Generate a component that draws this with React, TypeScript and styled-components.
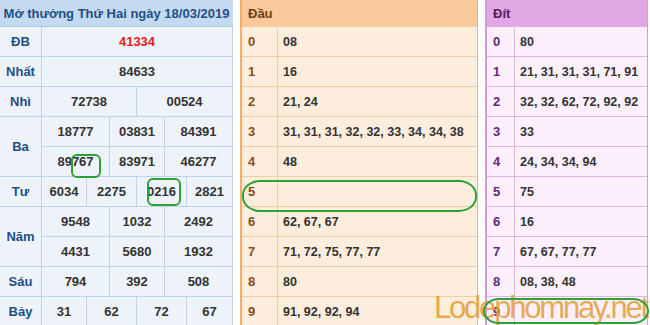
import styled, { createGlobalStyle } from "styled-components";
import { Fragment } from "react";

const GlobalStyle = createGlobalStyle`
  body {
    margin: 0;
    background: #fff;
    font-family: "Liberation Sans", Arial, sans-serif;
  }
  * { box-sizing: border-box; }
`;

type Tone = {
  head: string;
  body: string;
  line: string;
  edge: string;
  digit: string;
  title: string;
};

const orange: Tone = {
  head: "#f9c89b",
  body: "#fdeddc",
  line: "#f1cda6",
  edge: "#f2ad72",
  digit: "#86501a",
  title: "#6e4216",
};

const purple: Tone = {
  head: "#dfa7e3",
  body: "#fdf0fc",
  line: "#dfb6e2",
  edge: "#d49bd9",
  digit: "#66257e",
  title: "#561c5c",
};

const Page = styled.div`
  position: relative;
  width: 650px;
  height: 325px;
  overflow: hidden;
  display: flex;
  gap: 7px;
`;

const Results = styled.div`
  width: 233px;
  flex: none;
  display: grid;
  grid-template-columns: 42px 1fr;
  grid-template-rows: 27px;
  grid-auto-rows: 30px;
  background: #eef3fa;
`;

const Caption = styled.div`
  grid-column: 1 / -1;
  display: flex;
  align-items: center;
  justify-content: center;
  background: #c4daf3;
  color: #1f4f82;
  font-weight: bold;
  font-size: 13px;
  white-space: nowrap;
  border-bottom: 1px solid #a9c6e8;
`;

const Prize = styled.div<{ $span?: number }>`
  grid-row: span ${(p) => p.$span ?? 1};
  display: flex;
  align-items: center;
  justify-content: center;
  color: #1c4f86;
  font-weight: bold;
  font-size: 13px;
  border-right: 1px solid #bcd3ec;
  border-bottom: 1px solid #bcd3ec;
`;

const NumRow = styled.div<{ $cols: string }>`
  display: grid;
  grid-template-columns: ${(p) => p.$cols};
`;

const Num = styled.div<{ $red?: boolean }>`
  display: flex;
  align-items: center;
  justify-content: center;
  font-weight: bold;
  font-size: 13px;
  color: ${(p) => (p.$red ? "#e3201b" : "#333")};
  border-right: 1px solid #bcd3ec;
  border-bottom: 1px solid #bcd3ec;
`;

const Loto = styled.div<{ $tone: Tone; $w: number; $key: number }>`
  width: ${(p) => p.$w}px;
  flex: none;
  display: grid;
  grid-template-columns: ${(p) => p.$key}px 1fr;
  grid-template-rows: 27px;
  grid-auto-rows: 30px;
  background: ${(p) => p.$tone.body};
  border-left: 2px solid ${(p) => p.$tone.edge};
  border-right: 1px solid ${(p) => p.$tone.edge};
`;

const LotoHead = styled.div<{ $tone: Tone }>`
  display: flex;
  align-items: center;
  padding-left: 6px;
  background: ${(p) => p.$tone.head};
  color: ${(p) => p.$tone.title};
  font-weight: bold;
  font-size: 13px;
  border-right: 1px solid ${(p) => p.$tone.line};
  &:nth-child(2) { border-right: none; }
`;

const Digit = styled.div<{ $tone: Tone }>`
  display: flex;
  align-items: center;
  padding-left: 6px;
  color: ${(p) => p.$tone.digit};
  font-weight: bold;
  font-size: 13px;
  border-right: 1px solid ${(p) => p.$tone.line};
  border-bottom: 1px solid ${(p) => p.$tone.line};
`;

const Tail = styled.div<{ $tone: Tone }>`
  display: flex;
  align-items: center;
  padding-left: 5px;
  color: #333;
  font-weight: bold;
  font-size: 12.5px;
  white-space: nowrap;
  border-bottom: 1px solid ${(p) => p.$tone.line};
`;

const Ring = styled.div<{ $x: number; $y: number; $w: number; $h: number; $r: string }>`
  position: absolute;
  left: ${(p) => p.$x}px;
  top: ${(p) => p.$y}px;
  width: ${(p) => p.$w}px;
  height: ${(p) => p.$h}px;
  border: 2.5px solid #2ca236;
  border-radius: ${(p) => p.$r};
  pointer-events: none;
`;

const Watermark = styled.div`
  position: absolute;
  left: 434px;
  top: 290px;
  font-family: "Liberation Sans", Arial, sans-serif;
  font-size: 31px;
  letter-spacing: -2.2px;
  color: rgba(228, 160, 58, 0.88);
  white-space: nowrap;
  pointer-events: none;
`;

const prizes: { label: string; cols: string; rows: string[][]; red?: boolean }[] = [
  { label: "ĐB", cols: "1fr", rows: [["41334"]], red: true },
  { label: "Nhất", cols: "1fr", rows: [["84633"]] },
  { label: "Nhì", cols: "95px 1fr", rows: [["72738", "00524"]] },
  {
    label: "Ba",
    cols: "68px 55px 1fr",
    rows: [
      ["18777", "03831", "84391"],
      ["89767", "83971", "46277"],
    ],
  },
  { label: "Tư", cols: "45px 50px 50px 1fr", rows: [["6034", "2275", "0216", "2821"]] },
  {
    label: "Năm",
    cols: "68px 55px 1fr",
    rows: [
      ["9548", "1032", "2492"],
      ["4431", "5680", "1932"],
    ],
  },
  { label: "Sáu", cols: "68px 55px 1fr", rows: [["794", "392", "508"]] },
  { label: "Bảy", cols: "45px 50px 50px 1fr", rows: [["31", "62", "72", "67"]] },
];

const heads = [
  "08",
  "16",
  "21, 24",
  "31, 31, 31, 32, 32, 33, 34, 34, 38",
  "48",
  "",
  "62, 67, 67",
  "71, 72, 75, 77, 77",
  "80",
  "91, 92, 92, 94",
];

const tails = [
  "80",
  "21, 31, 31, 31, 71, 91",
  "32, 32, 62, 72, 92, 92",
  "33",
  "24, 34, 34, 94",
  "75",
  "16",
  "67, 67, 77, 77",
  "08, 38, 48",
  "",
];

function LotoTable({ title, tone, list, w, keyW }: { title: string; tone: Tone; list: string[]; w: number; keyW: number }) {
  return (
    <Loto $tone={tone} $w={w} $key={keyW}>
      <LotoHead $tone={tone}>{title}</LotoHead>
      <LotoHead $tone={tone} />
      {list.map((v, i) => (
        <Fragment key={i}>
          <Digit $tone={tone}>{i}</Digit>
          <Tail $tone={tone}>{v}</Tail>
        </Fragment>
      ))}
    </Loto>
  );
}

export default function App() {
  return (
    <>
      <GlobalStyle />
      <Page>
        <Results>
          <Caption>Mở thưởng Thứ Hai ngày 18/03/2019</Caption>
          {prizes.map((p) => (
            <Fragment key={p.label}>
              <Prize $span={p.rows.length}>{p.label}</Prize>
              {p.rows.map((r, ri) => (
                <NumRow key={ri} $cols={p.cols}>
                  {r.map((n, ni) => (
                    <Num key={ni} $red={p.red}>{n}</Num>
                  ))}
                </NumRow>
              ))}
            </Fragment>
          ))}
        </Results>
        <LotoTable title="Đầu" tone={orange} list={heads} w={238} keyW={36} />
        <LotoTable title="Đít" tone={purple} list={tails} w={163} keyW={28} />
        <Ring $x={71} $y={154} $w={30} $h={24} $r="6px" />
        <Ring $x={147} $y={178} $w={34} $h={28} $r="6px" />
        <Ring $x={242} $y={180} $w={235} $h={32} $r="18px / 15px" />
        <Watermark>Lodephomnay.net</Watermark>
        <Ring $x={483} $y={298} $w={166} $h={26} $r="16px / 13px" />
      </Page>
    </>
  );
}
